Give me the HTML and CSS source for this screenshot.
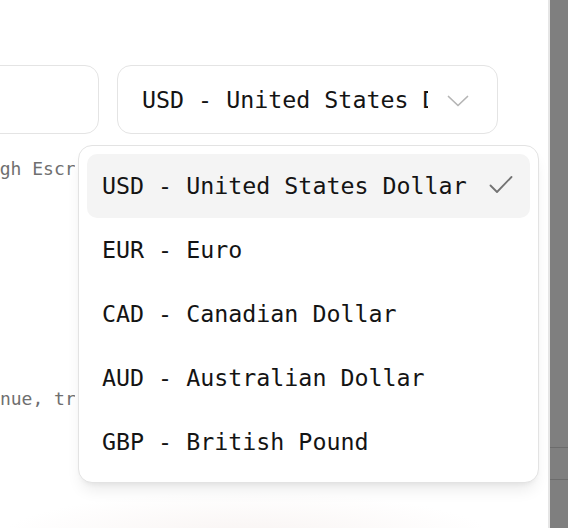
FILE: index.html
```html
<!DOCTYPE html>
<html lang="en">
<head>
<meta charset="utf-8">
<link rel="stylesheet" href="styles.css">
</head>
<body>
<div class="screen">
  <main class="page">
    <div class="content">
      <div class="field-row">
        <div class="input"></div>
        <div class="select-wrap">
          <button class="trigger" type="button">
            <span class="trigger-text">USD - United States Dollar</span>
            <svg class="chev" viewBox="0 0 22 12" width="22" height="12" fill="none" stroke="currentColor" stroke-width="1.7" stroke-linecap="round" stroke-linejoin="round"><path d="M1.5 1.5 11 10.5 20.5 1.5"/></svg>
          </button>
          <ul class="menu">
            <li class="opt active"><span>USD - United States Dollar</span>
              <svg class="check" viewBox="0 0 24 20" width="24" height="20" fill="none" stroke="currentColor" stroke-width="1.8" stroke-linecap="round" stroke-linejoin="round"><path d="M1.5 10.5 8 17 22.5 2"/></svg>
            </li>
            <li class="opt"><span>EUR - Euro</span></li>
            <li class="opt"><span>CAD - Canadian Dollar</span></li>
            <li class="opt"><span>AUD - Australian Dollar</span></li>
            <li class="opt"><span>GBP - British Pound</span></li>
          </ul>
        </div>
      </div>
      <p class="help help-one">Funds are held through Escrow until release.</p>
      <p class="help help-two">Applies to all revenue, transfers and payouts.</p>
    </div>
    <div class="glow"></div>
  </main>
  <aside class="side">
    <div class="side-top"></div>
    <div class="side-row"></div>
    <div class="side-rest"></div>
  </aside>
</div>
</body>
</html>
```

FILE: styles.css
```css
* { box-sizing: border-box; }
html, body { margin: 0; padding: 0; }
body {
  width: 568px;
  height: 528px;
  overflow: hidden;
  background: #fff;
  font-family: "DejaVu Sans Mono", "Liberation Mono", monospace;
  color: #1c1c1c;
}
.screen {
  display: flex;
  height: 528px;
}
.page {
  position: relative;
  width: 550px;
  height: 528px;
  overflow: hidden;
  border-right: 2px solid #e6e6e6;
  background: #fff;
}
.content {
  position: relative;
  z-index: 1;
  padding-top: 65px;
  margin-left: -201px;
}
.field-row {
  display: flex;
  gap: 18px;
}
.input {
  width: 300px;
  height: 69px;
  border: 1.5px solid #e4e4e4;
  border-radius: 14px;
  background: #fff;
}
.select-wrap {
  position: relative;
  width: 381px;
}
.trigger {
  display: flex;
  align-items: center;
  width: 381px;
  height: 69px;
  padding: 0 29px 0 24px;
  border: 1.5px solid #e4e4e4;
  border-radius: 14px;
  background: #fff;
  font: inherit;
  font-size: 23.3px;
  color: #141414;
  text-align: left;
}
.trigger-text {
  flex: 0 0 286px;
  overflow: hidden;
  white-space: nowrap;
  margin-right: 19px;
}
.chev { color: #b5b5b5; flex: none; margin-top: 2px; }
.menu {
  position: absolute;
  z-index: 5;
  top: 80px;
  left: -39px;
  width: 461px;
  margin: 0;
  padding: 8px 8px;
  list-style: none;
  background: #fff;
  border: 1px solid #e3e3e3;
  border-radius: 14px;
  box-shadow: 0 10px 16px -4px rgba(0,0,0,0.09), 0 4px 6px -4px rgba(0,0,0,0.08);
}
.opt {
  display: flex;
  align-items: center;
  justify-content: space-between;
  height: 64px;
  padding: 0 17px 2px 15px;
  border-radius: 10px;
  font-size: 23.3px;
  color: #141414;
  white-space: nowrap;
}
.opt.active { background: #f4f4f4; }
.check { color: #737373; }
.help {
  width: 276px;
  overflow: hidden;
  margin: 0;
  font-size: 18px;
  color: #6f6f6f;
  white-space: nowrap;
}
.help-one { margin-top: 24px; text-indent: -16px; }
.help-two { margin-top: 209px; text-indent: -5px; }
.glow {
  position: absolute;
  left: 0;
  right: 0;
  bottom: 0;
  height: 60px;
  background: radial-gradient(ellipse 60% 100% at 45% 115%, rgba(244,236,234,0.6), rgba(255,255,255,0) 75%);
}
.side {
  flex: 1;
  display: flex;
  flex-direction: column;
  background: #7f7f7f;
}
.side-top { height: 447px; }
.side-row { height: 33px; border-top: 1px solid #6c6c6c; border-bottom: 1px solid #6c6c6c; }
.side-rest { flex: 1; }
```
